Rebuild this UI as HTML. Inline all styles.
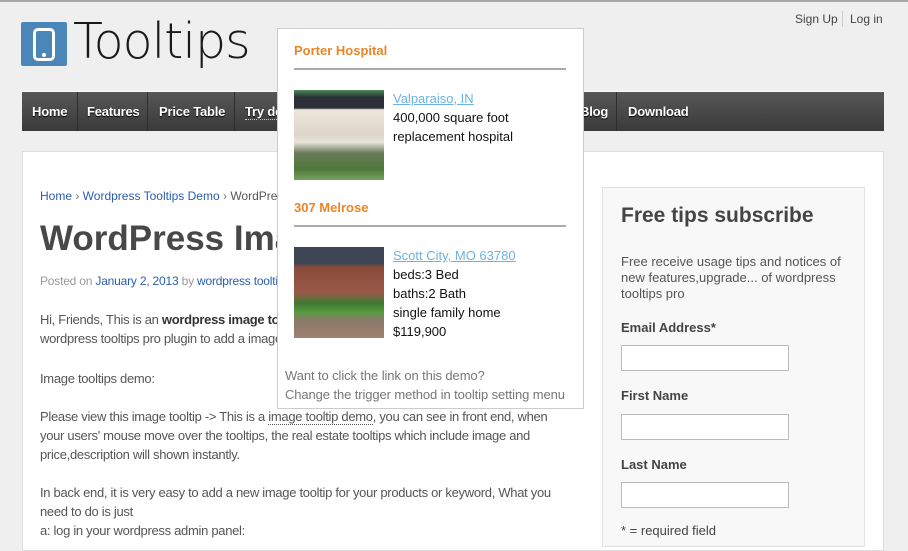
<!DOCTYPE html>
<html><head><style>
*{margin:0;padding:0;box-sizing:border-box}
body{width:908px;height:542px;overflow:hidden;background:#efefef;font-family:"Liberation Sans",Arial,sans-serif;position:relative}
.a{position:absolute;white-space:nowrap}
.nav{left:22px;top:91px;width:862px;height:40px;background:linear-gradient(#575757,#3a3a3a);border-top:1px solid #fff}
.nav span{position:absolute;top:12px;color:#fff;font-weight:bold;font-size:13px;text-shadow:0 1px 1px #000;letter-spacing:-0.2px}
.sep{position:absolute;top:0;width:1px;height:39px;background:#666;border-left:1px solid #2e2e2e}
.panel{left:22px;top:151px;width:862px;height:400px;background:#fff;border:1px solid #ddd}
.p{font-size:13px;color:#555;line-height:19px;letter-spacing:-0.3px}
.side{left:602px;top:187px;width:263px;height:360px;background:#f8f8f8;border:1px solid #e3e3e3}
.lab{font-size:13px;font-weight:bold;color:#444}
.inp{width:168px;height:26px;background:#fff;border:1px solid #bbb;position:absolute}
.tip{left:277px;top:28px;width:307px;height:381px;background:#fff;border:1px solid #ccc}
.or{color:#e8862a;font-weight:bold;font-size:13px}
.hr{height:2px;background:#aaa;width:272px}
.lk{color:#6ab3e3;text-decoration:underline;font-size:13px}
.t{font-size:13px;color:#111;line-height:19px}
</style></head><body>
<div class="a" style="left:0;top:0;width:908px;height:2px;background:#a8a8a8"></div>
<div class="a" style="left:21px;top:22px;width:46px;height:44px;background:#4b86b8;border-radius:2px"></div>
<div class="a" style="left:33px;top:28px;width:22px;height:33px;border:3px solid #fff;border-radius:5px"></div>
<div class="a" style="left:42px;top:53px;width:4px;height:4px;background:#fff;border-radius:50%"></div>
<div class="a" style="left:73px;top:13px;font-size:49px;color:#1a1a1a;font-family:'DejaVu Sans','Liberation Sans',sans-serif;font-weight:300;letter-spacing:-1px">Tooltips</div>
<div class="a" style="left:795px;top:12px;font-size:12px;color:#444">Sign Up</div>
<div class="a" style="left:842px;top:11px;width:1px;height:16px;background:#ccc"></div>
<div class="a" style="left:850px;top:12px;font-size:12px;color:#444">Log in</div>
<div class="a nav">
<span style="left:10px">Home</span><div class="sep" style="left:55px"></div>
<span style="left:65px">Features</span><div class="sep" style="left:125px"></div>
<span style="left:137px">Price Table</span><div class="sep" style="left:212px"></div>
<span style="left:223px;border-bottom:1px dotted #ccc">Try demo</span>
<span style="left:558px">Blog</span><div class="sep" style="left:594px"></div>
<span style="left:606px">Download</span>
</div>
<div class="a panel"></div>
<div class="a" style="left:40px;top:189px;font-size:12px;color:#2a5db0">Home <span style="color:#777">›</span> Wordpress Tooltips Demo <span style="color:#777">›</span> <span style="color:#555">WordPress Image Tooltips</span></div>
<div class="a" style="left:40px;top:219px;font-size:35px;font-weight:bold;color:#484848">WordPress Image Tooltips</div>
<div class="a" style="left:40px;top:274px;font-size:12px;color:#999;letter-spacing:-0.2px">Posted on <span style="color:#2a5db0">January 2, 2013</span> by <span style="color:#2a5db0">wordpress tooltips</span></div>
<div class="a p" style="left:40px;top:310px">Hi, Friends, This is an <b style="color:#333">wordpress image tooltips</b> demo, you can use<br>wordpress tooltips pro plugin to add a image tooltip</div>
<div class="a p" style="left:40px;top:369px">Image tooltips demo:</div>
<div class="a p" style="left:40px;top:407px">Please view this image tooltip -&gt; This is a <span style="border-bottom:1px dotted #555">image tooltip demo</span>, you can see in front end, when<br>your users' mouse move over the tooltips, the real estate tooltips which include image and<br>price,description will shown instantly.</div>
<div class="a p" style="left:40px;top:483px">In back end, it is very easy to add a new image tooltip for your products or keyword, What you<br>need to do is just<br>a: log in your wordpress admin panel:</div>
<div class="a side"></div>
<div class="a" style="left:621px;top:204px;font-size:21px;font-weight:bold;color:#444">Free tips subscribe</div>
<div class="a" style="left:621px;top:254px;font-size:13px;color:#555;line-height:16px">Free receive usage tips and notices of<br>new features,upgrade... of wordpress<br>tooltips pro</div>
<div class="a lab" style="left:621px;top:320px">Email Address*</div>
<div class="inp" style="left:621px;top:345px"></div>
<div class="a lab" style="left:621px;top:388px">First Name</div>
<div class="inp" style="left:621px;top:414px"></div>
<div class="a lab" style="left:621px;top:457px">Last Name</div>
<div class="inp" style="left:621px;top:482px"></div>
<div class="a" style="left:621px;top:523px;font-size:13px;color:#444">* = required field</div>
<div class="a tip"></div>
<div class="a or" style="left:294px;top:43px">Porter Hospital</div>
<div class="a hr" style="left:294px;top:68px"></div>
<div class="a" style="left:294px;top:90px;width:90px;height:90px;background:linear-gradient(#4c8a5a 0,#2c2f38 8%,#2c2f38 20%,#ece6dc 22%,#ddd5c8 50%,#e8e4dc 58%,#6a7a58 70%,#4d7a3a 88%,#7aa060 100%)"></div>
<div class="a lk" style="left:393px;top:91px">Valparaiso, IN</div>
<div class="a t" style="left:393px;top:108px">400,000 square foot<br>replacement hospital</div>
<div class="a or" style="left:294px;top:200px">307 Melrose</div>
<div class="a hr" style="left:294px;top:225px"></div>
<div class="a" style="left:294px;top:247px;width:90px;height:91px;background:linear-gradient(#3e4656 0,#3e4656 18%,#8a4a3a 22%,#9a5a48 50%,#3d7a30 62%,#5a9a40 72%,#8a7a6a 80%,#a08070 100%)"></div>
<div class="a lk" style="left:393px;top:248px">Scott City, MO 63780</div>
<div class="a t" style="left:393px;top:265px">beds:3 Bed<br>baths:2 Bath<br>single family home<br>$119,900</div>
<div class="a" style="left:285px;top:366px;font-size:13px;color:#777;line-height:19px;letter-spacing:-0.1px">Want to click the link on this demo?<br>Change the trigger method in tooltip setting menu</div>
</body></html>
